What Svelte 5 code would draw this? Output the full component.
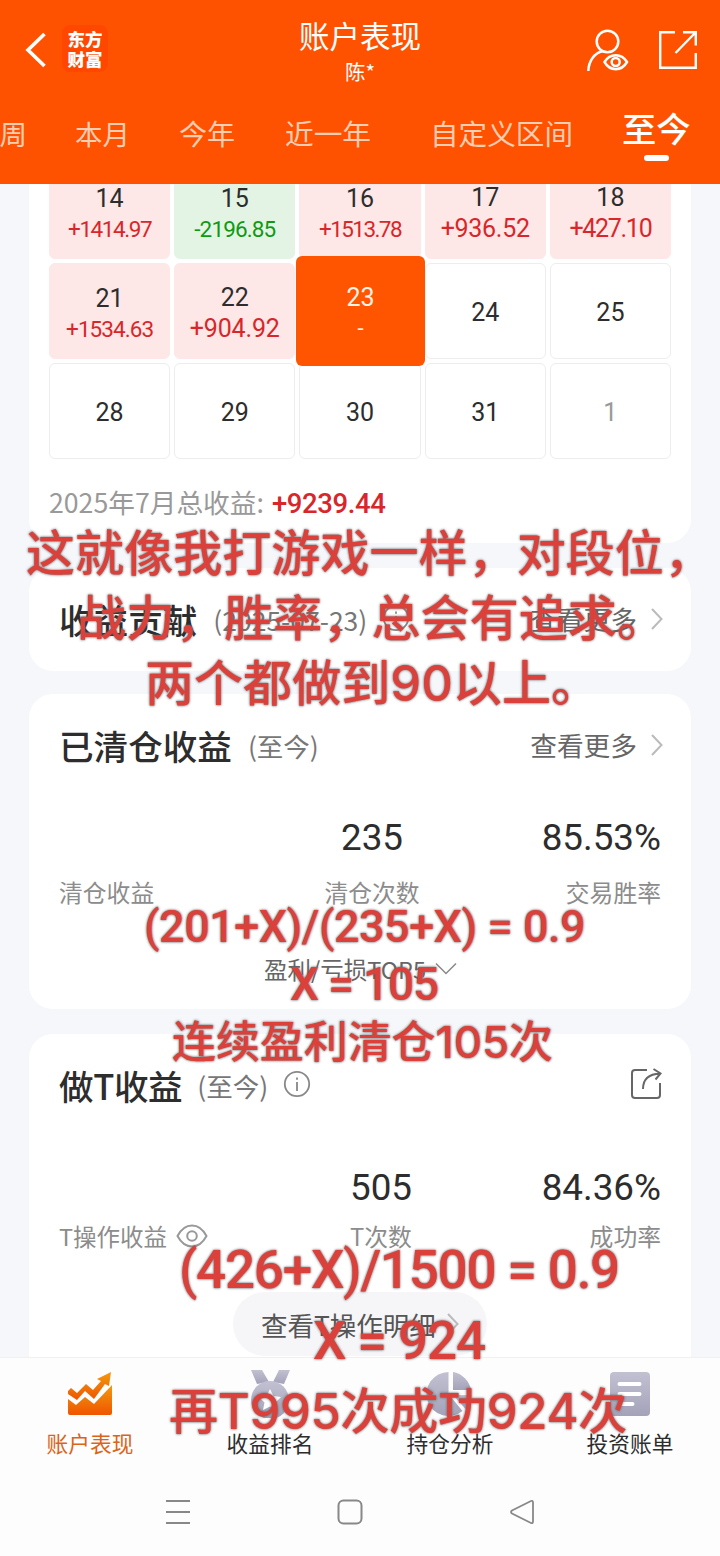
<script>
  const tabs = [
    { name: "本周", left: -28, size: 27.5 },
    { name: "本月", left: 75, size: 27.5 },
    { name: "今年", left: 179, size: 28 },
    { name: "近一年", left: 285, size: 28.7 },
    { name: "自定义区间", left: 430, size: 28.6 },
    { name: "至今", left: 622, size: 34.3, active: true },
  ];

  const days = [
    { day: 14, amount: "+1414.97", width: 83, small: true },
    { day: 15, amount: "-2196.85", width: 81, small: true },
    { day: 16, amount: "+1513.78", width: 82, small: true },
    { day: 17, amount: "+936.52", width: 89 },
    { day: 18, amount: "+427.10", width: 82 },
    { day: 21, amount: "+1534.63", width: 87, small: true },
    { day: 22, amount: "+904.92", width: 90 },
    { day: 23, amount: "-", selected: true },
    { day: 24 },
    { day: 25 },
    { day: 28 },
    { day: 29 },
    { day: 30 },
    { day: 31 },
    { day: 1, next: true },
  ];

  const captions = [
    { text: "这就像我打游戏一样，对段位，", left: 26, y: 554, size: 49, width: 687 },
    { text: "战力，胜率，总会有追求。", left: 77, y: 619, size: 49, width: 589 },
    { text: "两个都做到90以上。", left: 145, y: 684, size: 49, width: 455 },
    { text: "(201+X)/(235+X) = 0.9", left: 144, y: 927, size: 45, width: 441, formula: true },
    { text: "X = 105", left: 290, y: 984, size: 46, width: 148, formula: true },
    { text: "连续盈利清仓105次", left: 172, y: 1042, size: 44, width: 381 },
    { text: "(426+X)/1500 = 0.9", left: 179, y: 1270, size: 53, width: 440, formula: true },
    { text: "X = 924", left: 313, y: 1341, size: 53, width: 172, formula: true },
    { text: "再T995次成功924次", left: 169, y: 1412, size: 49, width: 458 },
  ];

  // spread the letters so that the line takes the given width
  function fit(node, width) {
    if (!width) return;
    const natural = node.getBoundingClientRect().width;
    const n = node.textContent.length;
    node.style.letterSpacing = (width - natural) / n + "px";
  }
</script>

{#snippet more()}
  <svg class="more" width="14" height="24" viewBox="0 0 14 24">
    <path d="M2 2l9.500 10L2 22" fill="none" stroke="#bbb" stroke-width="2" />
  </svg>
{/snippet}

{#snippet info()}
  <svg class="info" width="28" height="28" viewBox="0 0 28 28" fill="none" stroke="#888" stroke-width="1.8">
    <circle cx="14" cy="14" r="12.200" />
    <path d="M14 12v9M14 7.500v2.200" />
  </svg>
{/snippet}

<div class="screen">
  <header>
    <svg class="back" width="22" height="38" viewBox="0 0 22 38">
      <path d="M19.500 3L3 19l16.500 16" fill="none" stroke="#fff" stroke-width="3.600" />
    </svg>
    <div class="logo"><span>东方</span><span>财富</span></div>
    <div class="heading">
      <h1>账户表现</h1>
      <p>陈*</p>
    </div>
    <svg class="user" width="44" height="44" viewBox="0 0 44 44" fill="none" stroke="#fff" stroke-width="2.500">
      <circle cx="21.500" cy="13.500" r="10.800" />
      <path d="M2.300 43c.4-10 6-18 14.500-20" />
      <path d="M18.500 34c5.500-9 17-9 22.500 0-5.500 9.500-17 9.500-22.500 0z" />
      <circle cx="29.700" cy="34" r="4" />
    </svg>
    <svg class="open" width="40" height="40" viewBox="0 0 40 40" fill="none" stroke="#fff" stroke-width="2.400">
      <path d="M17 2.200H2.200v35.600h35.600V23" />
      <path d="M25 2.200h12.800V15.500M37.500 2.500L17.500 23" />
    </svg>
    <nav>
      {#each tabs as tab}
        <span
          class="tab"
          class:active={tab.active}
          style={`left: ${tab.left}px; font-size: ${tab.size}px`}>{tab.name}</span
        >
      {/each}
    </nav>
  </header>

  <main>
    <section class="calendar-card">
      <div class="calendar">
        {#each days as d}
          <div
            class="day"
            class:up={d.amount && d.amount[0] == "+"}
            class:down={d.amount && d.amount.length > 1 && d.amount[0] == "-"}
            class:selected={d.selected}
            class:next={d.next}
            class:small={d.small}
          >
            <span class="date">{d.day}</span>
            {#if d.amount}
              <span class="amount"><span use:fit={d.width}>{d.amount}</span></span>
            {/if}
          </div>
        {/each}
      </div>
      <p class="total">2025年7月总收益: <b>+9239.44</b></p>
    </section>

    <section class="contribution">
      <div class="title">
        <h2>收益贡献</h2>
        <span class="range">(2025-07-23)</span>
        {@render info()}
        <a href="#more">查看更多{@render more()}</a>
      </div>
    </section>

    <section class="cleared">
      <div class="title">
        <h2>已清仓收益</h2>
        <span class="range">(至今)</span>
        <a href="#more">查看更多{@render more()}</a>
      </div>
      <div class="stats">
        <div class="label first">清仓收益</div>
        <div class="stat">
          <strong>235</strong>
          <div class="label">清仓次数</div>
        </div>
        <div class="stat last">
          <strong>85.53%</strong>
          <div class="label">交易胜率</div>
        </div>
      </div>
      <div class="top5">
        盈利/亏损TOP5
        <svg width="22" height="14" viewBox="0 0 22 14">
          <path d="M1 1.500l10 10 10-10" fill="none" stroke="#888" stroke-width="1.500" />
        </svg>
      </div>
    </section>

    <section class="trade">
      <div class="title">
        <h2>做T收益</h2>
        <span class="range">(至今)</span>
        {@render info()}
        <svg class="share" width="32" height="32" viewBox="0 0 32 32" fill="none" stroke="#666" stroke-width="2">
          <path d="M17 2H5Q2 2 2 5v22q0 3 3 3h22q3 0 3-3V15" />
          <path d="M13 21C13 11 19 6 30 5.500M23.500 1l7 4.500-5 6" />
        </svg>
      </div>
      <div class="stats">
        <div class="label first">
          T操作收益
          <svg width="32" height="24" viewBox="0 0 32 24" fill="none" stroke="#999" stroke-width="2">
            <path d="M1.500 12C9-2 23-2 30.500 12 23 26 9 26 1.500 12z" />
            <circle cx="16" cy="12" r="4.800" />
          </svg>
        </div>
        <div class="stat">
          <strong>505</strong>
          <div class="label">T次数</div>
        </div>
        <div class="stat last">
          <strong>84.36%</strong>
          <div class="label">成功率</div>
        </div>
      </div>
      <div class="detail">查看T操作明细{@render more()}</div>
    </section>
  </main>

  <footer>
    <svg width="0" height="0" class="defs">
      <linearGradient id="orange" x1="0" y1="0" x2="0" y2="1">
        <stop offset="0" stop-color="#f29a10" />
        <stop offset="1" stop-color="#ef5500" />
      </linearGradient>
      <linearGradient id="grey" x1="0" y1="0" x2="0" y2="1">
        <stop offset="0" stop-color="#c2c1d2" />
        <stop offset="1" stop-color="#a3a2b9" />
      </linearGradient>
    </svg>
    <div class="item current">
      <svg width="48" height="48" viewBox="0 0 48 48">
        <g fill="url(#orange)">
          <path d="M2 21l3-3 6 5 9-9 7 6 8-9-4-2L45 2l-2 14-4-2-11 15-9-8-8 9-9-6z" />
          <path d="M2 29l8 6 9-8 9 7 18-19v28q0 2-2 2H4q-2 0-2-2z" />
        </g>
      </svg>
      <span>账户表现</span>
    </div>
    <div class="item">
      <svg width="48" height="48" viewBox="0 0 48 48" fill="url(#grey)">
        <path d="M5 0h11l7 12-12 2zM33 0h11l-6 14-11-2z" />
        <circle cx="24" cy="30" r="19" />
        <path fill="#fff" d="M24 19l3.500 7 7.500 1-5.500 5.500 1.500 7.500-7-3.500-7 3.500 1.500-7.500L13 27l7.500-1z" />
      </svg>
      <span>收益排名</span>
    </div>
    <div class="item">
      <svg width="48" height="48" viewBox="0 0 48 48" fill="url(#grey)">
        <path d="M22.500 2v22l14 17A22 22 0 1 1 22.500 2z" />
        <path d="M27 2a22 22 0 0 1 18 18H27z" />
        <path d="M27 25h18.500a22 22 0 0 1-6 14z" />
      </svg>
      <span>持仓分析</span>
    </div>
    <div class="item">
      <svg width="48" height="48" viewBox="0 0 48 48">
        <rect x="4" y="2" width="40" height="44" rx="4" fill="url(#grey)" />
        <path d="M13.500 14h20M13.500 24h20M13.500 34h13" stroke="#fff" stroke-width="4" stroke-linecap="round" />
      </svg>
      <span>投资账单</span>
    </div>
  </footer>

  <div class="system">
    <svg width="26" height="26" viewBox="0 0 26 26" fill="none" stroke="#888" stroke-width="2">
      <path d="M1 2h24M1 13h24M1 24h24" />
    </svg>
    <svg width="26" height="26" viewBox="0 0 26 26" fill="none" stroke="#888" stroke-width="2">
      <rect x="1.500" y="1.500" width="23" height="23" rx="5" />
    </svg>
    <svg width="26" height="26" viewBox="0 0 26 26" fill="none" stroke="#888" stroke-width="1.800">
      <path d="M22 2L3 11.500q-2 1.500 0 3L22 24q2 .8 2-1.500v-19Q24 1.200 22 2z" />
    </svg>
  </div>

  {#each captions as c}
    <span
      class="caption"
      class:formula={c.formula}
      style={`left: ${c.left}px; top: ${c.y - 35}px; font-size: ${c.size}px`}
      use:fit={c.width}>{c.text}</span
    >
  {/each}
</div>

<style>
  :global(body) {
    margin: 0;
    background: #fdfdfd;
  }
  .screen {
    position: relative;
    width: 720px;
    height: 1556px;
    overflow: hidden;
    background: #f6f7fa;
    font-family: "Noto Sans CJK SC", sans-serif;
    color: #2d2d2d;
  }
  h1,
  h2,
  p {
    margin: 0;
    font-weight: 400;
  }
  svg {
    display: block;
    flex: none;
  }
  header {
    position: relative;
    box-sizing: border-box;
    height: 184px;
    padding: 0 22px 0 25px;
    display: flex;
    background: #ff5200;
    color: #fff;
  }
  .back {
    margin-top: 31px;
  }
  .logo {
    display: flex;
    flex-direction: column;
    align-items: center;
    justify-content: center;
    width: 46px;
    height: 47px;
    margin: 25px 0 0 15px;
    border-radius: 8px;
    background: #ff4700;
    font-size: 17.5px;
    font-weight: 900;
    line-height: 20px;
  }
  .heading {
    flex: 1;
    padding-left: 26px;
    text-align: center;
  }
  .heading h1 {
    margin-top: 15px;
    font-size: 30.5px;
    line-height: 40px;
  }
  .heading p {
    margin-top: 1px;
    font-size: 20.5px;
    line-height: 30px;
  }
  .user {
    margin: 28px 28px 0 0;
  }
  .open {
    margin-top: 30px;
  }
  .tab {
    position: absolute;
    top: 113px;
    line-height: 40px;
    white-space: nowrap;
    color: #ffcdb2;
  }
  .tab.active {
    top: 107px;
    color: #fff;
    font-weight: 500;
  }
  .tab.active::after {
    content: "";
    position: absolute;
    left: 22px;
    top: 48px;
    width: 25px;
    height: 6px;
    border-radius: 3px;
    background: #fff;
  }
  main {
    height: 1173px;
    overflow: hidden;
    padding: 0 29px;
  }
  section {
    box-sizing: border-box;
    border-radius: 24px;
    background: #fff;
    padding: 0 30px 0 31px;
  }
  .calendar-card {
    height: 380px;
    margin-top: -21px;
    padding: 0 20px;
  }
  .calendar {
    display: grid;
    grid-template-columns: repeat(5, 1fr);
    grid-auto-rows: 96px;
    gap: 4px;
  }
  .day {
    box-sizing: border-box;
    display: flex;
    flex-direction: column;
    align-items: center;
    justify-content: center;
    padding-top: 4px;
    border: 1px solid #ededed;
    border-radius: 6px;
    font-family: Roboto, sans-serif;
    font-size: 25px;
    line-height: 32px;
  }
  .amount {
    height: 32px;
    margin-top: -1px;
    font-size: 25px;
    white-space: nowrap;
  }
  .small .date {
    padding-top: 1px;
    margin-bottom: -1px;
  }
  .small .amount {
    font-size: 22.5px;
  }
  .up {
    border-color: #fde8e7;
    background: #fde8e7;
  }
  .up .amount {
    color: #d9262a;
  }
  .down {
    border-color: #e3f4e4;
    background: #e3f4e4;
  }
  .down .amount {
    color: #109a13;
  }
  .selected {
    margin: -7px -4px -7px -3px;
    border: 0;
    background: #ff5500;
    color: #fff3e8;
    z-index: 1;
  }
  .selected .amount {
    font-size: 22px;
  }
  .next {
    color: #999;
  }
  .total {
    margin-top: 23px;
    font-size: 26.7px;
    line-height: 40px;
    color: #999;
  }
  .total b {
    margin-left: 2px;
    font-family: Roboto, sans-serif;
    font-size: 27.5px;
    font-weight: 500;
    letter-spacing: -0.4px;
    color: #d9262a;
  }
  .title {
    display: flex;
    align-items: center;
    height: 40px;
  }
  h2 {
    margin-left: -1px;
    font-size: 34.6px;
    line-height: 40px;
    font-weight: 500;
  }
  .range {
    margin-left: 16px;
    font-size: 26.5px;
    color: #777;
  }
  .trade h2 {
    letter-spacing: -0.4px;
  }
  .trade .range {
    margin-left: 15px;
  }
  .info {
    margin: -2px 0 0 15px;
  }
  .title a {
    display: flex;
    align-items: center;
    margin-left: auto;
    font-size: 26.7px;
    line-height: 40px;
    color: #666;
    text-decoration: none;
  }
  .title .more {
    margin: 0 -3px 0 13px;
  }
  .contribution {
    height: 103px;
    margin-top: 25px;
    padding-top: 31px;
  }
  .cleared {
    height: 315px;
    margin-top: 23px;
    padding-top: 31px;
  }
  .stats {
    display: grid;
    grid-template-columns: 265px 96px 1fr;
    align-items: end;
    height: 98px;
    margin: 47px 0 0 -1px;
  }
  .trade .stats {
    grid-template-columns: 290px 64px 1fr;
    height: 101px;
    margin-top: 48px;
  }
  .stat {
    text-align: center;
  }
  .stat.last {
    text-align: right;
  }
  strong {
    display: block;
    margin-bottom: 14px;
    font-family: Roboto, sans-serif;
    font-size: 36.8px;
    font-weight: 400;
    line-height: 44px;
  }
  .trade strong {
    margin-bottom: 8px;
  }
  .label {
    font-size: 23.8px;
    line-height: 36px;
    color: #8c8c8c;
  }
  .first {
    display: flex;
    align-items: center;
    gap: 9px;
  }
  .trade .first {
    font-size: 23.5px;
  }
  .top5 {
    display: flex;
    align-items: center;
    gap: 9px;
    margin: 41px 0 0 204px;
    font-size: 23.5px;
    line-height: 36px;
    color: #666;
  }
  .trade {
    height: 400px;
    margin-top: 25px;
    padding-top: 31px;
  }
  .share {
    margin: -2px -1px 0 auto;
  }
  .detail {
    box-sizing: border-box;
    display: flex;
    align-items: center;
    gap: 10px;
    width: 254px;
    height: 64px;
    margin: 38px 0 0 173px;
    padding-left: 28px;
    border-radius: 32px;
    background: #f6f6f9;
    font-size: 26.5px;
    color: #555;
    white-space: nowrap;
  }
  footer {
    box-sizing: border-box;
    display: flex;
    height: 111px;
    border-top: 1px solid #f0f0f0;
    background: #fdfdfd;
  }
  .defs {
    position: absolute;
  }
  .item {
    display: flex;
    flex-direction: column;
    align-items: center;
    width: 180px;
    padding-top: 12px;
    font-size: 21.7px;
    line-height: 30px;
  }
  .item span {
    margin-top: 10px;
  }
  .current {
    color: #dd6316;
  }
  .system {
    display: flex;
    justify-content: center;
    gap: 146px;
    height: 88px;
    padding: 31px 20px 0 0;
    background: #fdfdfd;
  }
  .caption {
    position: absolute;
    z-index: 2;
    line-height: 70px;
    white-space: pre;
    font-family: Inter, "Noto Sans CJK SC", sans-serif;
    font-weight: 500;
    color: #dc403a;
    text-shadow:
      0 0 2px #777,
      0 0 3px rgba(60, 60, 60, 0.5);
  }
  .formula {
    font-family: Roboto, sans-serif;
  }
</style>
